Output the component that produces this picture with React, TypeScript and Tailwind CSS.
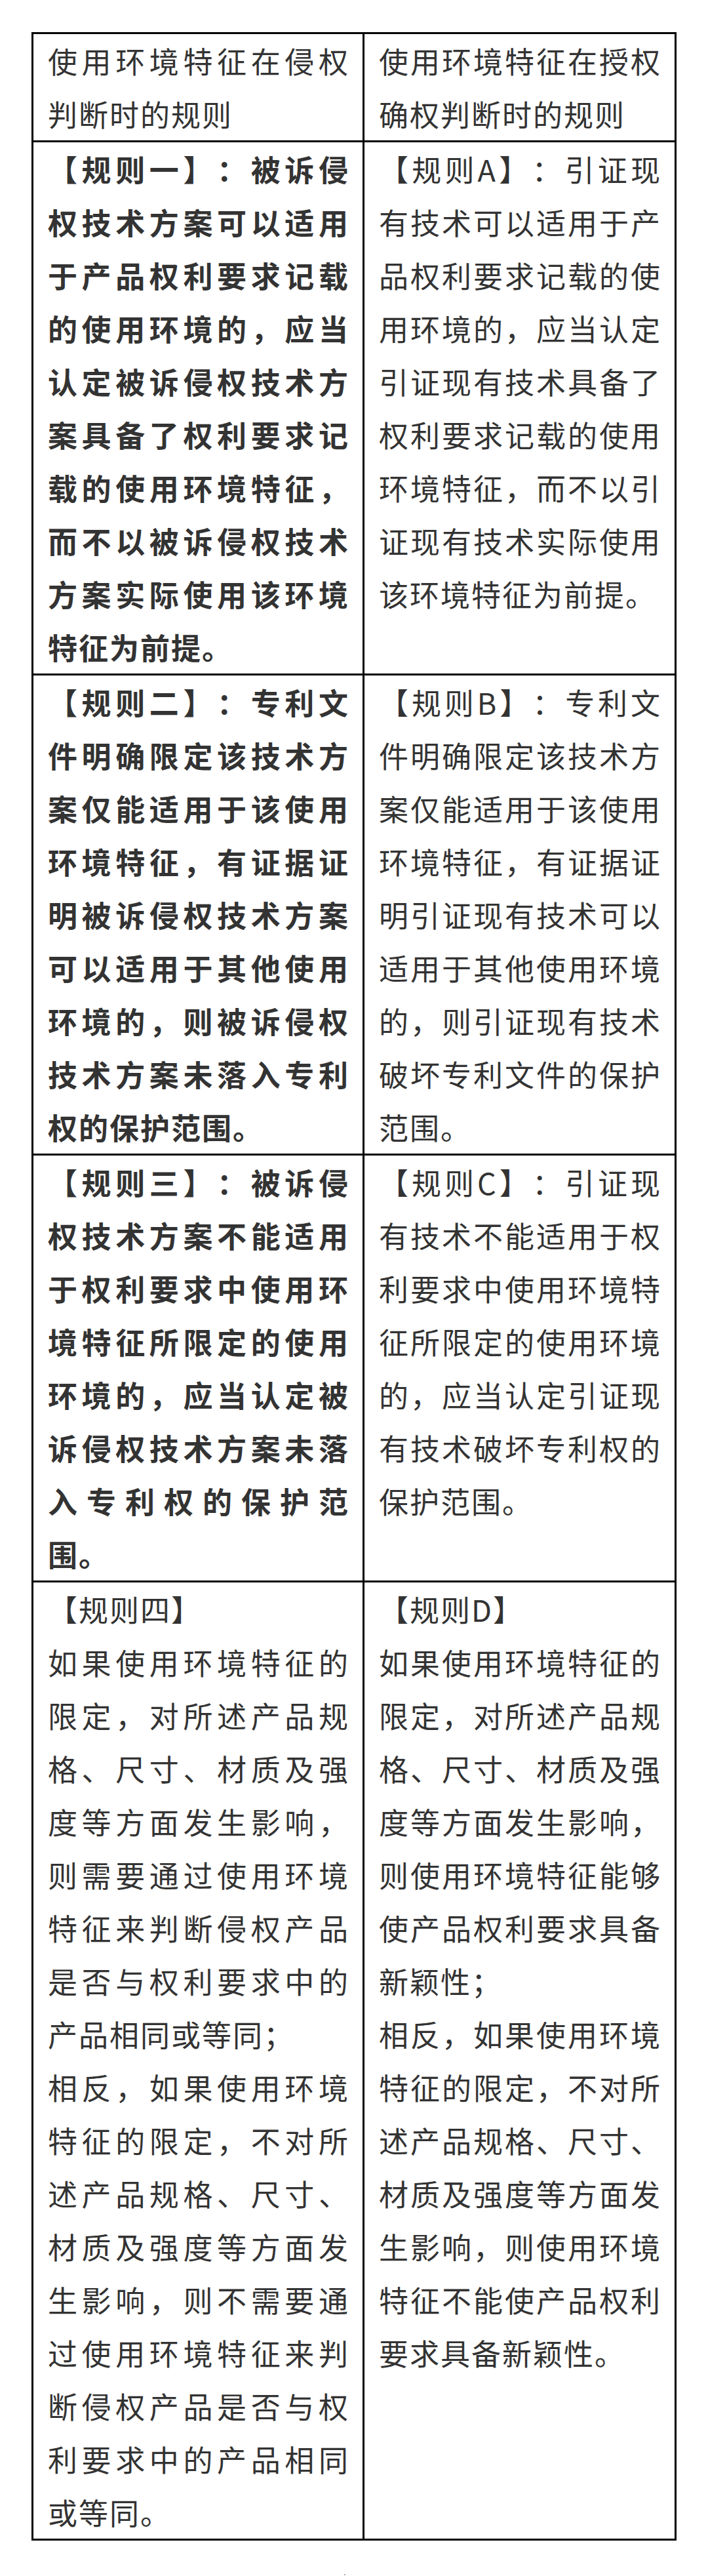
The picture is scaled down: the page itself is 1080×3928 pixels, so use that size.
const rows: { left: string[]; right: string[]; bold?: boolean }[] = [
  {
    left: ["使用环境特征在侵权判断时的规则"],
    right: ["使用环境特征在授权确权判断时的规则"],
  },
  {
    bold: true,
    left: ["【规则一】：被诉侵权技术方案可以适用于产品权利要求记载的使用环境的，应当认定被诉侵权技术方案具备了权利要求记载的使用环境特征，而不以被诉侵权技术方案实际使用该环境特征为前提。"],
    right: ["【规则A】：引证现有技术可以适用于产品权利要求记载的使用环境的，应当认定引证现有技术具备了权利要求记载的使用环境特征，而不以引证现有技术实际使用该环境特征为前提。"],
  },
  {
    bold: true,
    left: ["【规则二】：专利文件明确限定该技术方案仅能适用于该使用环境特征，有证据证明被诉侵权技术方案可以适用于其他使用环境的，则被诉侵权技术方案未落入专利权的保护范围。"],
    right: ["【规则B】：专利文件明确限定该技术方案仅能适用于该使用环境特征，有证据证明引证现有技术可以适用于其他使用环境的，则引证现有技术破坏专利文件的保护范围。"],
  },
  {
    bold: true,
    left: ["【规则三】：被诉侵权技术方案不能适用于权利要求中使用环境特征所限定的使用环境的，应当认定被诉侵权技术方案未落入专利权的保护范围。"],
    right: ["【规则C】：引证现有技术不能适用于权利要求中使用环境特征所限定的使用环境的，应当认定引证现有技术破坏专利权的保护范围。"],
  },
  {
    left: [
      "【规则四】",
      "如果使用环境特征的限定，对所述产品规格、尺寸、材质及强度等方面发生影响，则需要通过使用环境特征来判断侵权产品是否与权利要求中的产品相同或等同；",
      "相反，如果使用环境特征的限定，不对所述产品规格、尺寸、材质及强度等方面发生影响，则不需要通过使用环境特征来判断侵权产品是否与权利要求中的产品相同或等同。",
    ],
    right: [
      "【规则D】",
      "如果使用环境特征的限定，对所述产品规格、尺寸、材质及强度等方面发生影响，则使用环境特征能够使产品权利要求具备新颖性；",
      "相反，如果使用环境特征的限定，不对所述产品规格、尺寸、材质及强度等方面发生影响，则使用环境特征不能使产品权利要求具备新颖性。",
    ],
  },
];

function Cell({ lines, bold, first }: { lines: string[]; bold?: boolean; first?: boolean }) {
  return (
    <div
      className={`pl-[22px] pr-[20px] text-justify [text-spacing-trim:space-all] ${first ? "w-[505px] shrink-0 border-r-[3px] border-black" : "flex-1"} ${bold ? "font-bold" : "font-normal"}`}
    >
      {lines.map((line) => (
        <p key={line}>{line}</p>
      ))}
    </div>
  );
}

export default function App() {
  return (
    <div className="min-h-[3928px] bg-white pt-[49px] font-['Noto_Sans_CJK_SC','Noto_Sans',sans-serif] text-[45px] leading-[81px] tracking-[2px] text-[#333]">
      <div className="mx-auto w-[984px] border-[3px] border-black">
        {rows.map((row, index) => (
          <div key={index} className={`flex ${index > 0 ? "border-t-[3px] border-black" : ""}`}>
            <Cell lines={row.left} bold={row.bold} first />
            <Cell lines={row.right} />
          </div>
        ))}
      </div>
      <div className="ml-[525px] mt-[51px] h-[2px] w-[2px] bg-[#aaa]" />
    </div>
  );
}
